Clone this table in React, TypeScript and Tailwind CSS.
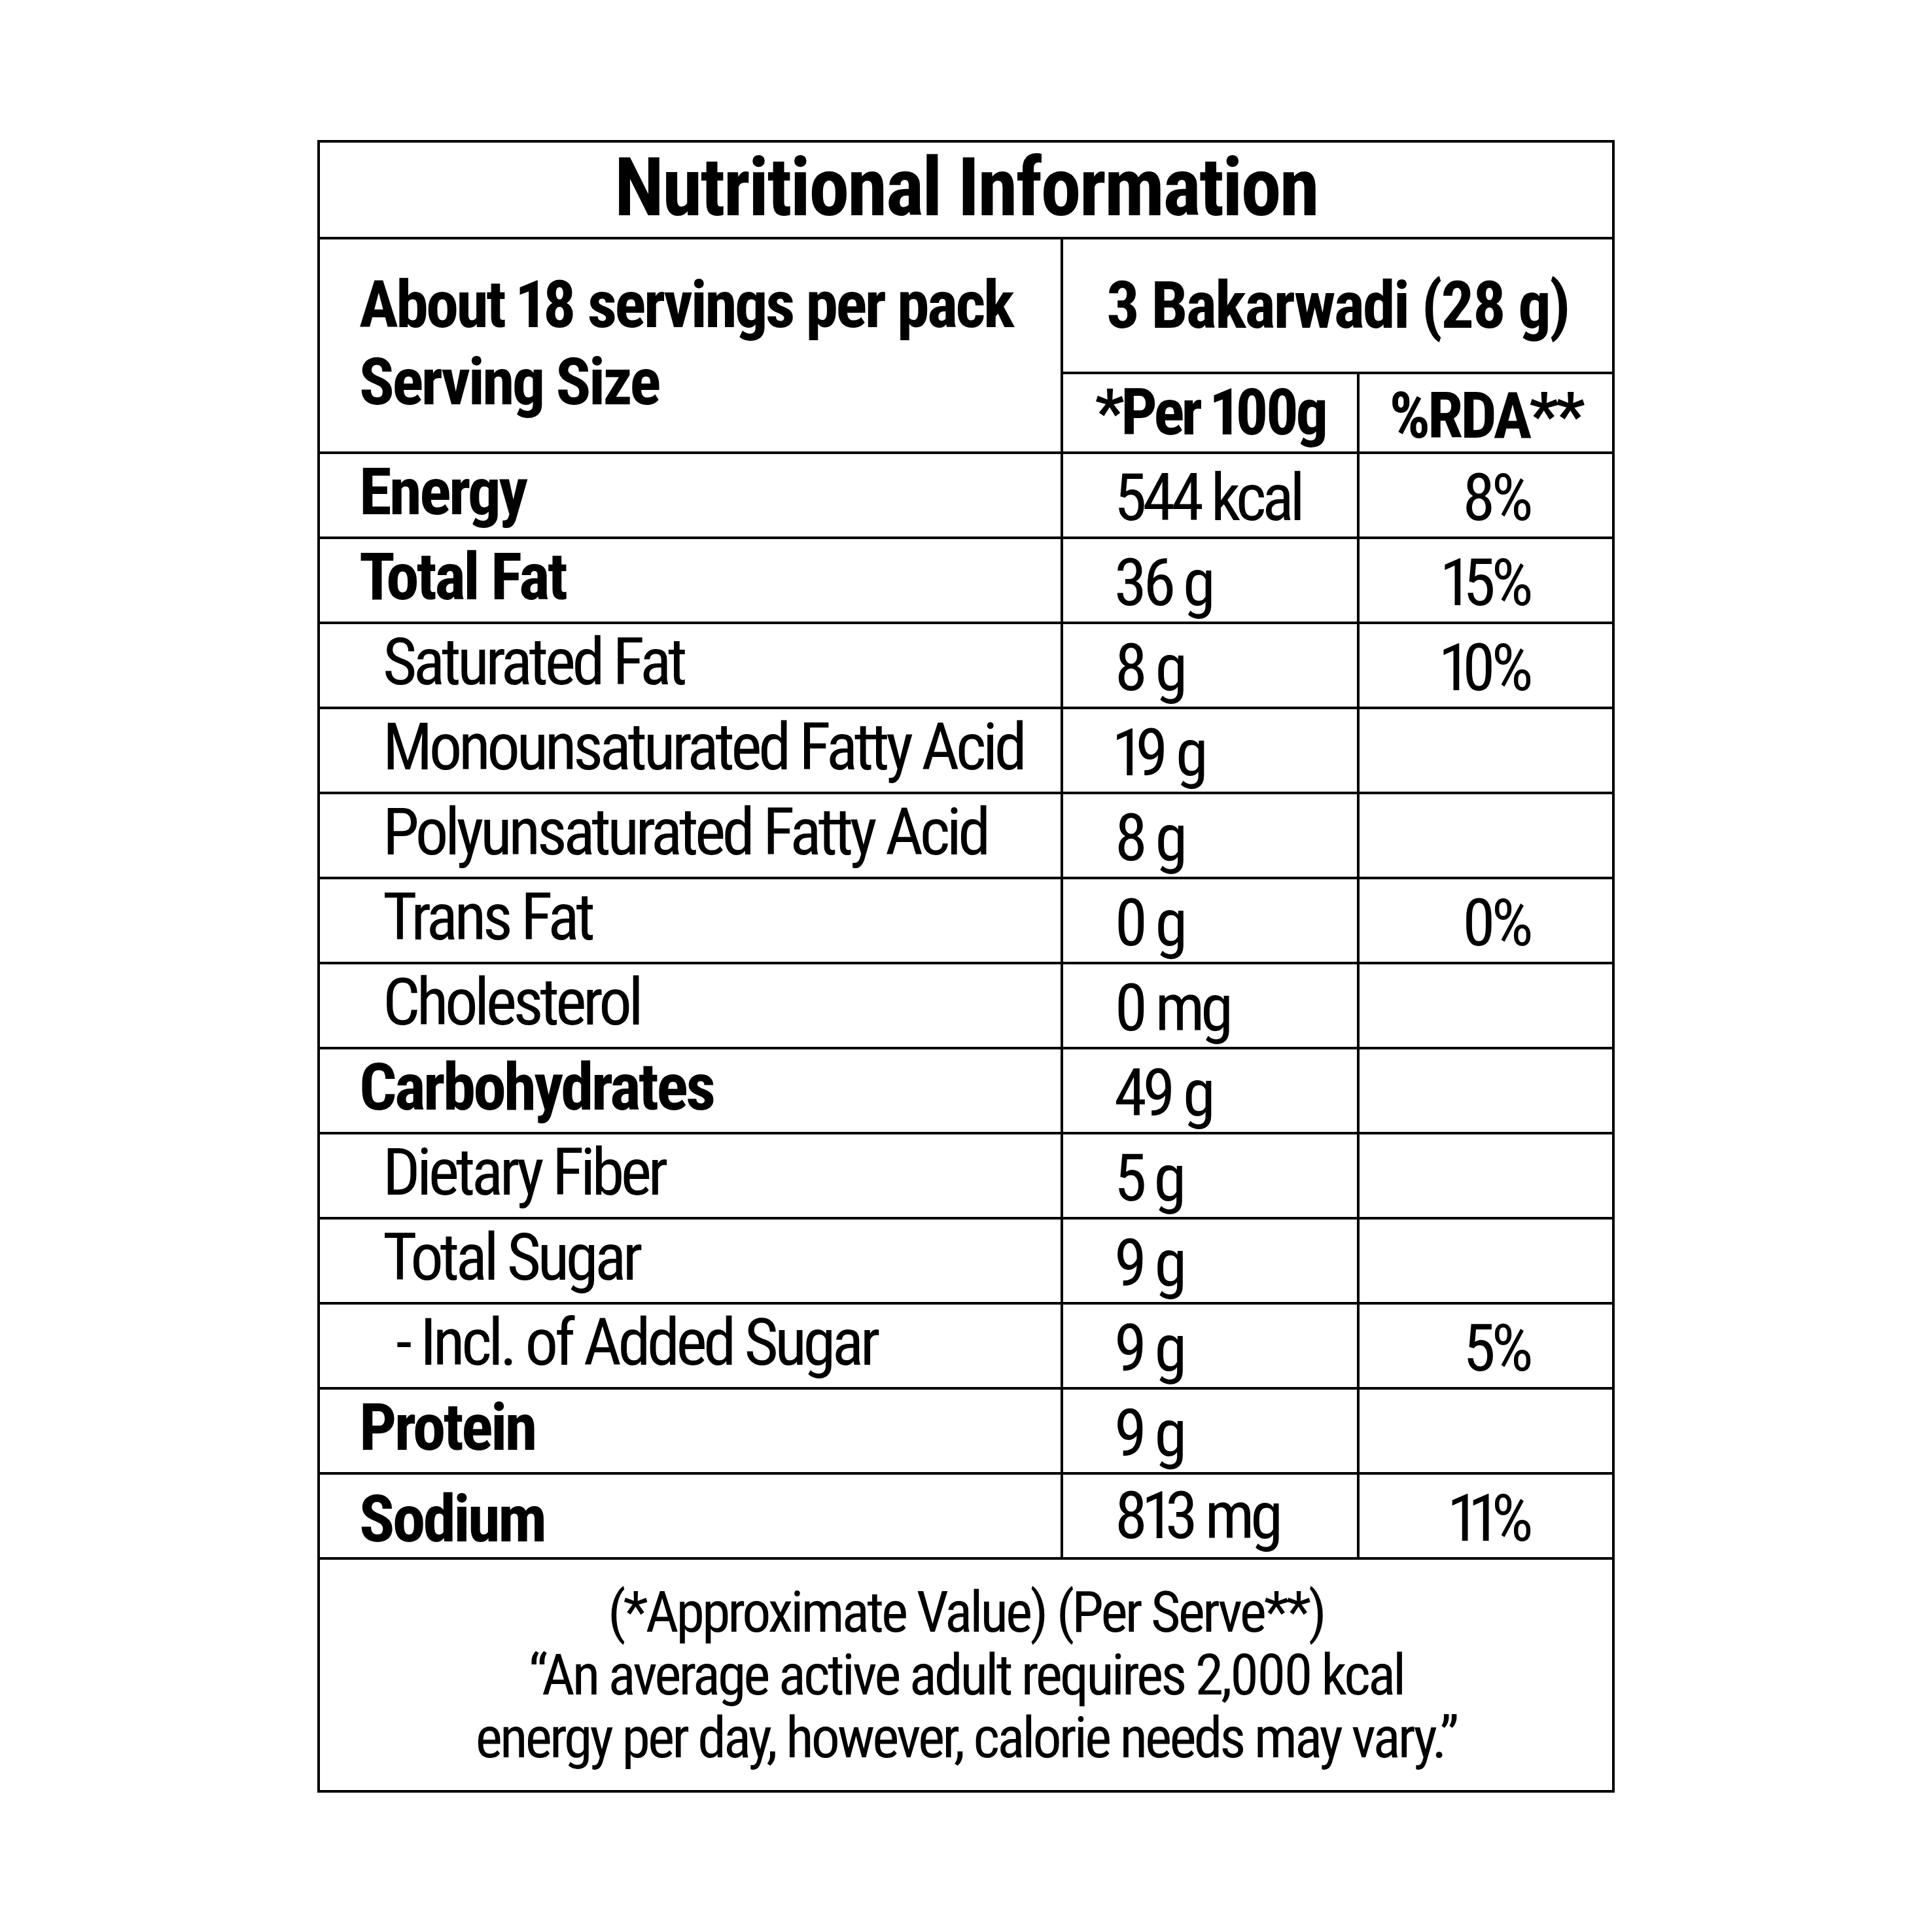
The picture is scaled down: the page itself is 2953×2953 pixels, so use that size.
import React from "react";

type Row = {
  label: string;
  value: string;
  rda?: string;
  bold?: boolean;
  level?: 0 | 1 | 2;
  centered?: boolean;
};

const rows: Row[] = [
  { label: "Energy", value: "544 kcal", rda: "8%", bold: true },
  { label: "Total Fat", value: "36 g", rda: "15%", bold: true },
  { label: "Saturated Fat", value: "8 g", rda: "10%", level: 1 },
  { label: "Monounsaturated Fatty Acid", value: "19 g", level: 1 },
  { label: "Polyunsaturated Fatty Acid", value: "8 g", level: 1 },
  { label: "Trans Fat", value: "0 g", rda: "0%", level: 1 },
  { label: "Cholesterol", value: "0 mg", level: 1 },
  { label: "Carbohydrates", value: "49 g", bold: true },
  { label: "Dietary Fiber", value: "5 g", level: 1 },
  { label: "Total Sugar", value: "9 g", level: 1 },
  { label: "- Incl. of Added Sugar", value: "9 g", rda: "5%", level: 2 },
  { label: "Protein", value: "9 g", bold: true },
  { label: "Sodium", value: "813 mg", rda: "11%", bold: true, centered: true },
];

const font =
  "font-['Roboto_Condensed','Roboto','Liberation_Sans',sans-serif] [font-stretch:75%] proportional-nums";

function NutrientRow({ row }: { row: Row }) {
  const pad =
    row.level === 2 ? "pl-[116px]" : row.level === 1 ? "pl-[96px]" : "pl-[60px]";
  return (
    <div className="flex h-[130px] border-b-4 border-black whitespace-nowrap text-[101px] leading-none">
      {/* Label */}
      <div
        className={`flex w-[1136px] items-center border-r-4 border-black ${pad} ${
          row.centered ? "pt-[10px]" : "pb-[10px]"
        } ${row.bold ? "font-bold tracking-[-0.035em]" : "font-normal tracking-[-0.055em]"}`}
      >
        <span>{row.label}</span>
      </div>
      {/* Per 100g */}
      <div
        className={`flex w-[453px] items-center border-r-4 border-black pl-[78px] tracking-[-0.062em] ${
          row.centered ? "pt-0" : "pt-[8px]"
        }`}
      >
        <span>{row.value}</span>
      </div>
      {/* %RDA */}
      <div className="flex flex-1 items-center justify-end pr-[127px] pt-[8px] tracking-[-0.065em]">
        <span>{row.rda}</span>
      </div>
    </div>
  );
}

export default function App() {
  return (
    <div className={`flex h-[2953px] w-[2953px] items-center justify-center bg-white text-black ${font}`}>
      <div className="flex w-[1983px] flex-col border-4 border-black whitespace-nowrap">
        {/* Title */}
        <div className="flex h-[148px] items-center justify-center border-b-4 border-black pb-[6px]">
          <h1 className="text-[124px] font-bold leading-none tracking-[-0.022em]">Nutritional Information</h1>
        </div>

        {/* Serving header */}
        <div className="flex h-[328px] border-b-4 border-black">
          <div className="flex w-[1136px] flex-col justify-center border-r-4 border-black pb-[6px] pl-[60px] text-[100px] font-bold leading-[118px] tracking-[-0.035em]">
            <div>About 18 servings per pack</div>
            <div>Serving Size</div>
          </div>
          <div className="flex flex-1 flex-col">
            <div className="flex h-[206px] items-center justify-center border-b-4 border-black">
              <span className="text-[100px] font-bold leading-none tracking-[-0.027em]">3 Bakarwadi (28 g)</span>
            </div>
            <div className="flex flex-1">
              <div className="flex w-[453px] items-center justify-center border-r-4 border-black">
                <span className="text-[98px] font-bold leading-none tracking-[-0.05em]">*Per 100g</span>
              </div>
              <div className="flex flex-1 items-center justify-center pt-[10px]">
                <span className="text-[98px] font-bold leading-none tracking-[-0.04em]">%RDA**</span>
              </div>
            </div>
          </div>
        </div>

        {rows.map((row) => (
          <NutrientRow key={row.label} row={row} />
        ))}

        {/* Footer */}
        <div className="flex h-[352px] flex-col items-center justify-center text-center text-[88px] leading-[96px] tracking-[-0.045em]">
          <p>(*Approximate Value) (Per Serve**)</p>
          <p>“An average active adult requires 2,000 kcal</p>
          <p>energy per day, however, calorie needs may vary.”</p>
        </div>
      </div>
    </div>
  );
}
